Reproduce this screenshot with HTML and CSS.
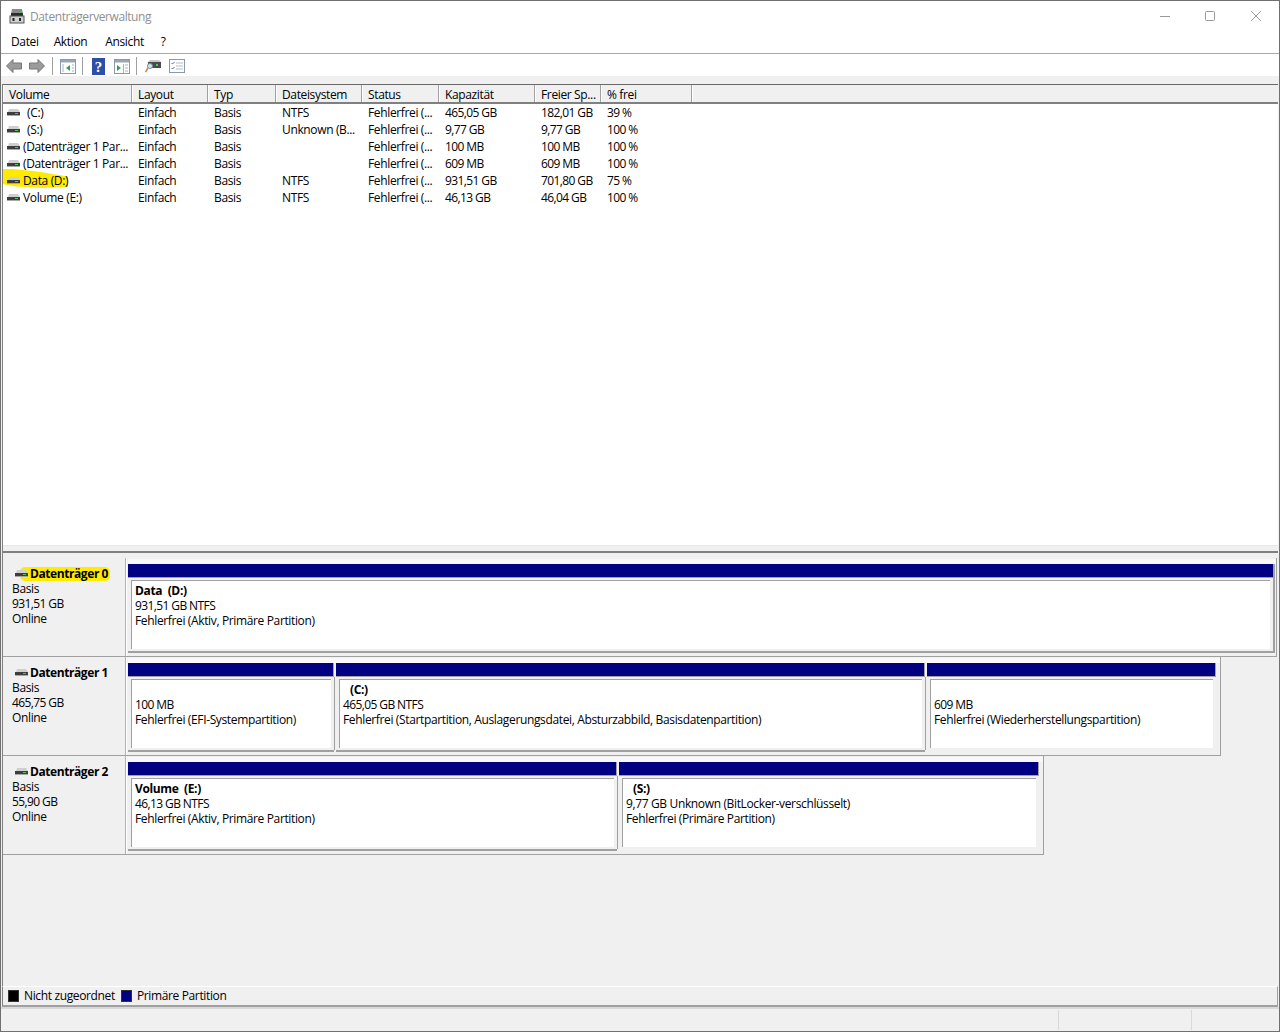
FILE: index.html
```html
<!DOCTYPE html>
<html lang="de">
<head>
<meta charset="utf-8">
<title>Datenträgerverwaltung</title>
<link rel="stylesheet" href="styles.css">
</head>
<body>
<svg class="defs" width="0" height="0">
  <symbol id="disk" viewBox="0 0 13 7">
    <path d="M1 3 2 0h9l2 3z" fill="#cfcfcf"/>
    <rect x="0" y="3" width="13" height="3" fill="#3e3e3e"/>
    <rect x="0" y="6" width="13" height="1" fill="#a8a8a8"/>
    <rect x="8" y="4" width="3" height="1" fill="#3fd04a"/>
  </symbol>
</svg>
<div class="window">
  <header class="titlebar">
    <svg class="app-icon" width="16" height="16" viewBox="0 0 16 16">
      <path d="M3 1h10l1 5H2z" fill="#8a8a8a"/>
      <rect x="2" y="5" width="12" height="3" fill="#2c2c2c"/>
      <rect x="10" y="4" width="2" height="1" fill="#3fd04a"/>
      <rect x="1" y="8" width="14" height="7" fill="#d0d0d0" stroke="#555"/>
      <rect x="3.500" y="10" width="2" height="3" fill="#222"/>
      <rect x="10" y="10" width="2" height="3" fill="#222"/>
    </svg>
    <span class="title">Datenträgerverwaltung</span>
    <div class="caption">
      <svg width="46" height="30" viewBox="0 0 46 30"><path d="M19 15.500h10" stroke="#999" fill="none"/></svg>
      <svg width="46" height="30" viewBox="0 0 46 30"><rect x="18.500" y="10.500" width="9" height="9" rx="1" stroke="#999" fill="none"/></svg>
      <svg width="46" height="30" viewBox="0 0 46 30"><path d="M18 10l10 10M28 10 18 20" stroke="#999" fill="none"/></svg>
    </div>
  </header>
  <nav class="menubar">
    <span class="menu">Datei</span><span class="menu m-action">Aktion</span><span class="menu m-view">Ansicht</span><span class="menu m-help">?</span>
  </nav>
  <div class="toolbar">
    <svg class="tool" width="16" height="16" viewBox="0 0 16 16"><path d="M.5 8 7 1.500V5h8.500v6H7v3.500z" fill="#9b9b9b" stroke="#777"/></svg>
    <svg class="tool t-next" width="16" height="16" viewBox="0 0 16 16"><path d="M15.500 8 9 1.500V5H.5v6H9v3.500z" fill="#9b9b9b" stroke="#777"/></svg>
    <i class="sep sep-a"></i>
    <svg class="tool" width="16" height="15" viewBox="0 0 16 15"><rect x=".5" y=".5" width="15" height="14" fill="#fff" stroke="#8d9aa5"/><rect x="1" y="1" width="14" height="2.500" fill="#9aa6b0"/><path d="M10 6v6L6 9z" fill="#35a24a"/><path d="M2 6h2M2 8h2M2 10h2M2 12h2M12 6h2M12 9h2M12 12h2" stroke="#a9b3bb"/></svg>
    <i class="sep sep-b"></i>
    <svg class="tool" width="13" height="17" viewBox="0 0 13 17"><rect width="13" height="17" fill="#2c4fa8"/><text class="help-q" x="6.500" y="14">?</text></svg>
    <svg class="tool t-pane" width="16" height="15" viewBox="0 0 16 15"><rect x=".5" y=".5" width="15" height="14" fill="#fff" stroke="#8d9aa5"/><rect x="1" y="1" width="14" height="2.500" fill="#9aa6b0"/><path d="M3 6v6l4-3z" fill="#35a24a"/><path d="M9.500 5v9M11 6h3M11 9h3M11 12h3" stroke="#a9b3bb"/></svg>
    <i class="sep sep-c"></i>
    <svg class="tool" width="16" height="15" viewBox="0 0 16 15"><rect x="3" y="3" width="13" height="6" fill="#4a4a4a"/><path d="M3 3l2-2h9l2 2z" fill="#c8c8c8"/><rect x="11" y="5" width="2" height="2" fill="#3fd04a"/><circle cx="5" cy="7" r="2.500" fill="#cfe3f2" stroke="#7b8a96"/><path d="M3 9 .5 13" stroke="#b98a4a" stroke-width="1.500"/></svg>
    <svg class="tool t-list" width="16" height="14" viewBox="0 0 16 14"><rect x=".5" y=".5" width="15" height="13" fill="#fff" stroke="#8d9aa5"/><path d="M2.500 4l1 1 2-2M2.500 9l1 1 2-2" stroke="#3a78c8" fill="none"/><path d="M7 4h7M7 7h7M7 10h7" stroke="#b5bdc4"/></svg>
  </div>
  <div class="strip"></div>

  <section class="volumes">
    <div class="grid-row head">
      <span class="hc">Volume</span><span class="hc">Layout</span><span class="hc">Typ</span><span class="hc">Dateisystem</span><span class="hc">Status</span><span class="hc">Kapazität</span><span class="hc">Freier Sp...</span><span class="hc">% frei</span><span class="hc hc-fill"></span>
    </div>
    <div class="grid-row row">
      <span class="name"><svg class="disk"><use href="#disk"/></svg><span class="gap">(C:)</span></span><span>Einfach</span><span>Basis</span><span>NTFS</span><span>Fehlerfrei (...</span><span>465,05 GB</span><span>182,01 GB</span><span>39 %</span>
    </div>
    <div class="grid-row row">
      <span class="name"><svg class="disk"><use href="#disk"/></svg><span class="gap">(S:)</span></span><span>Einfach</span><span>Basis</span><span>Unknown (B...</span><span>Fehlerfrei (...</span><span>9,77 GB</span><span>9,77 GB</span><span>100 %</span>
    </div>
    <div class="grid-row row">
      <span class="name"><svg class="disk"><use href="#disk"/></svg>(Datenträger 1 Par...</span><span>Einfach</span><span>Basis</span><span></span><span>Fehlerfrei (...</span><span>100 MB</span><span>100 MB</span><span>100 %</span>
    </div>
    <div class="grid-row row">
      <span class="name"><svg class="disk"><use href="#disk"/></svg>(Datenträger 1 Par...</span><span>Einfach</span><span>Basis</span><span></span><span>Fehlerfrei (...</span><span>609 MB</span><span>609 MB</span><span>100 %</span>
    </div>
    <div class="grid-row row">
      <i class="mark mark-list"></i>
      <span class="name"><svg class="disk"><use href="#disk"/></svg>Data (D:)</span><span>Einfach</span><span>Basis</span><span>NTFS</span><span>Fehlerfrei (...</span><span>931,51 GB</span><span>701,80 GB</span><span>75 %</span>
    </div>
    <div class="grid-row row">
      <span class="name"><svg class="disk"><use href="#disk"/></svg>Volume (E:)</span><span>Einfach</span><span>Basis</span><span>NTFS</span><span>Fehlerfrei (...</span><span>46,13 GB</span><span>46,04 GB</span><span>100 %</span>
    </div>
  </section>
  <div class="splitter"></div>

  <section class="disks">
    <div class="disk-row r0">
      <div class="label">
        <i class="mark mark-disk"></i>
        <div class="disk-name"><svg class="disk"><use href="#disk"/></svg><b>Datenträger 0</b></div>
        <div>Basis</div><div class="num">931,51 GB</div><div>Online</div>
      </div>
      <div class="parts">
        <div class="part p-full"><div class="bar"></div><div class="body"><b>Data&nbsp; (D:)</b><br><span class="num">931,51 GB NTFS</span><br>Fehlerfrei (Aktiv, Primäre Partition)</div></div>
      </div>
    </div>
    <div class="disk-row r1">
      <div class="label">
        <div class="disk-name"><svg class="disk"><use href="#disk"/></svg><b>Datenträger 1</b></div>
        <div>Basis</div><div class="num">465,75 GB</div><div>Online</div>
      </div>
      <div class="parts">
        <div class="part p-efi"><div class="bar"></div><div class="body"><br><span class="num">100 MB</span><br>Fehlerfrei (EFI-Systempartition)</div></div>
        <div class="part p-c"><div class="bar"></div><div class="body"><b class="indent">(C:)</b><br><span class="num">465,05 GB NTFS</span><br>Fehlerfrei (Startpartition, Auslagerungsdatei, Absturzabbild, Basisdatenpartition)</div></div>
        <div class="part p-rec open"><div class="bar"></div><div class="body"><br><span class="num">609 MB</span><br>Fehlerfrei (Wiederherstellungspartition)</div></div>
      </div>
    </div>
    <div class="disk-row r2">
      <div class="label">
        <div class="disk-name"><svg class="disk"><use href="#disk"/></svg><b>Datenträger 2</b></div>
        <div>Basis</div><div class="num">55,90 GB</div><div>Online</div>
      </div>
      <div class="parts">
        <div class="part p-e"><div class="bar"></div><div class="body"><b>Volume&nbsp; (E:)</b><br><span class="num">46,13 GB NTFS</span><br>Fehlerfrei (Aktiv, Primäre Partition)</div></div>
        <div class="part p-s open"><div class="bar"></div><div class="body"><b class="indent">(S:)</b><br>9,77 GB Unknown (BitLocker-verschlüsselt)<br>Fehlerfrei (Primäre Partition)</div></div>
      </div>
    </div>
  </section>

  <div class="legend">
    <i class="swatch black"></i><span>Nicht zugeordnet</span>
    <i class="swatch navy"></i><span>Primäre Partition</span>
  </div>
  <footer class="status"><i class="cell c2"></i><i class="cell c3"></i></footer>
</div>
</body>
</html>
```
FILE: styles.css
```css
* { box-sizing: border-box; }
html, body { margin: 0; height: 100%; }
body { font: 12px/15px "Open Sans", "Noto Sans", sans-serif; color: #000; background: #f0f0f0; letter-spacing: -0.36px; }
.defs { position: absolute; }
.window { width: 1280px; height: 1032px; border: 1px solid #707070; display: flex; flex-direction: column; overflow: hidden; }
.num { letter-spacing: -0.6px; }

.titlebar { height: 29px; background: #fff; display: flex; align-items: center; padding-left: 8px; flex: none; }
.app-icon { flex: none; }
.title { margin: 1px 0 0 5px; color: #8f8f8f; letter-spacing: -0.42px; }
.caption { margin-left: auto; display: flex; }

.menubar { height: 24px; background: #fff; border-bottom: 1px solid #a8a8b4; display: flex; align-items: center; padding-left: 2px; flex: none; }
.menu { padding: 0 8px; }
.m-action { margin-left: -1px; }
.m-view { margin-left: 2px; }
.m-help { margin-left: 1px; }

.toolbar { height: 22px; background: #fff; display: flex; align-items: center; padding: 2px 0 0 5px; flex: none; }
.tool { flex: none; margin-right: 7px; }
.t-next { margin-right: 5px; }
.t-pane { margin-left: 2px; margin-right: 5px; }
.t-list { margin-left: 1px; }
.sep { width: 1px; height: 18px; background: #a0a0a0; }
.sep-a { margin: 0 7px 0 2px; }
.sep-b { margin: 0 9px 0 -1px; }
.sep-c { margin: 0 8px 0 1px; }
.help-q { font: bold 15px "Liberation Serif", serif; fill: #fff; text-anchor: middle; letter-spacing: 0; }

.strip { height: 8px; background: #f0f0f0; flex: none; }

.volumes { height: 461px; margin: 0 1px 0 1px; background: #fff; border-top: 1px solid #696969; border-left: 1px solid #808080; display: flex; flex-direction: column; position: relative; flex: none; }
.grid-row { display: grid; grid-template-columns: 129px 76px 68px 86px 77px 96px 66px 91px 1fr; }
.head { height: 19px; background: #f0f0f0; border-bottom: 2px solid #808080; }
.hc { border-right: 1px solid #a0a0a0; border-left: 1px solid #fff; padding: 2px 0 0 5px; line-height: 15px; white-space: nowrap; overflow: hidden; }
.hc-fill { border-right: 0; }
.row { height: 17px; line-height: 17px; position: relative; }
.row > span { padding-left: 6px; white-space: nowrap; position: relative; }
.row > span:nth-last-child(-n+3) { letter-spacing: -0.6px; }
.row > .name { padding-left: 4px; display: flex; align-items: center; }
.row .disk { margin-right: 3px; }
.gap { padding-left: 4px; }
.disk { width: 13px; height: 7px; flex: none; }

.mark { position: absolute; background: #ffeb00; display: block; }
.mark-list { left: 0; top: -3px; width: 65px; height: 19px; clip-path: polygon(0 0, 15% 0, 50% 12%, 100% 40%, 100% 95%, 60% 100%, 20% 92%, 0 80%); }
.mark-disk { left: 17px; top: 9px; width: 90px; height: 14px; border-radius: 5px; }

.splitter { height: 8px; background: #f0f0f0; border-bottom: 2px solid #808080; border-left: 1px solid #808080; margin: 0 1px 0 1px; box-shadow: inset 0 1px 0 #e8e8e8; flex: none; }

.disks { flex: 1; display: flex; flex-direction: column; background: #f0f0f0; padding-top: 5px; margin: 0 1px 0 1px; border-left: 1px solid #808080; }
.disk-row { height: 99px; display: flex; flex: none; border-bottom: 1px solid #a0a0a0; border-right: 1px solid #a0a0a0; }
.r0 { width: 1274px; }
.r1 { width: 1218px; }
.r2 { width: 1041px; }
.label { width: 123px; flex: none; padding: 7px 0 0 9px; position: relative; border-right: 1px solid #b0b0b0; box-shadow: 1px 0 0 #fff; }
.disk-name { position: relative; display: flex; align-items: center; gap: 2px; height: 16px; padding-left: 3px; }
.disk-name b { font-weight: 700; letter-spacing: -0.42px; }

.parts { display: flex; gap: 2px; margin: 1px 0 0 2px; flex: 1; align-items: flex-start; border-top: 5px solid #f8f8f8; }
.part { display: flex; flex-direction: column; flex: none; height: 89px; border-bottom: 2px solid #a0a0a0; position: relative; }
.open { border-bottom-color: transparent; }
.p-full { width: 1147px; border-right: 2px solid #a0a0a0; }
.p-full .bar { border-right: 0; }
.p-efi { width: 206px; }
.p-c { width: 589px; }
.p-rec { width: 289px; }
.p-e { width: 489px; }
.p-s { width: 420px; }
.bar { height: 14px; background: #000080; border-right: 1px solid #a0a0a0; border-bottom: 1px solid #a0a0a0; flex: none; }
.body { flex: 1; margin: 2px 3px 2px 3px; background: #fff; border-top: 1px solid #a0a0a0; border-left: 1px solid #a0a0a0; padding: 2px 0 0 3px; white-space: nowrap; }
.indent { padding-left: 7px; }
.part + .part::before { content: ""; position: absolute; left: -2px; top: 14px; bottom: 0; width: 1px; background: #a0a0a0; }

.legend { height: 21px; display: flex; align-items: center; background: #f0f0f0; border-top: 1px solid #fff; border-bottom: 2px solid #a0a0a0; border-right: 1px solid #a0a0a0; border-left: 1px solid #808080; padding: 0 0 1px 5px; margin: 0 1px 0 1px; flex: none; }
.swatch { width: 11px; height: 12px; margin-right: 5px; border: 1px solid #333; }
.black { background: #000; }
.navy { background: #000080; margin-left: 6px; }

.status { height: 24px; flex: none; display: flex; justify-content: flex-end; border-top: 2px solid #d9d9d9; background: #f0f0f0; padding-top: 1px; }
.cell { border-left: 1px solid #d9d9d9; height: 20px; }
.c2 { width: 133px; }
.c3 { width: 88px; }
```
